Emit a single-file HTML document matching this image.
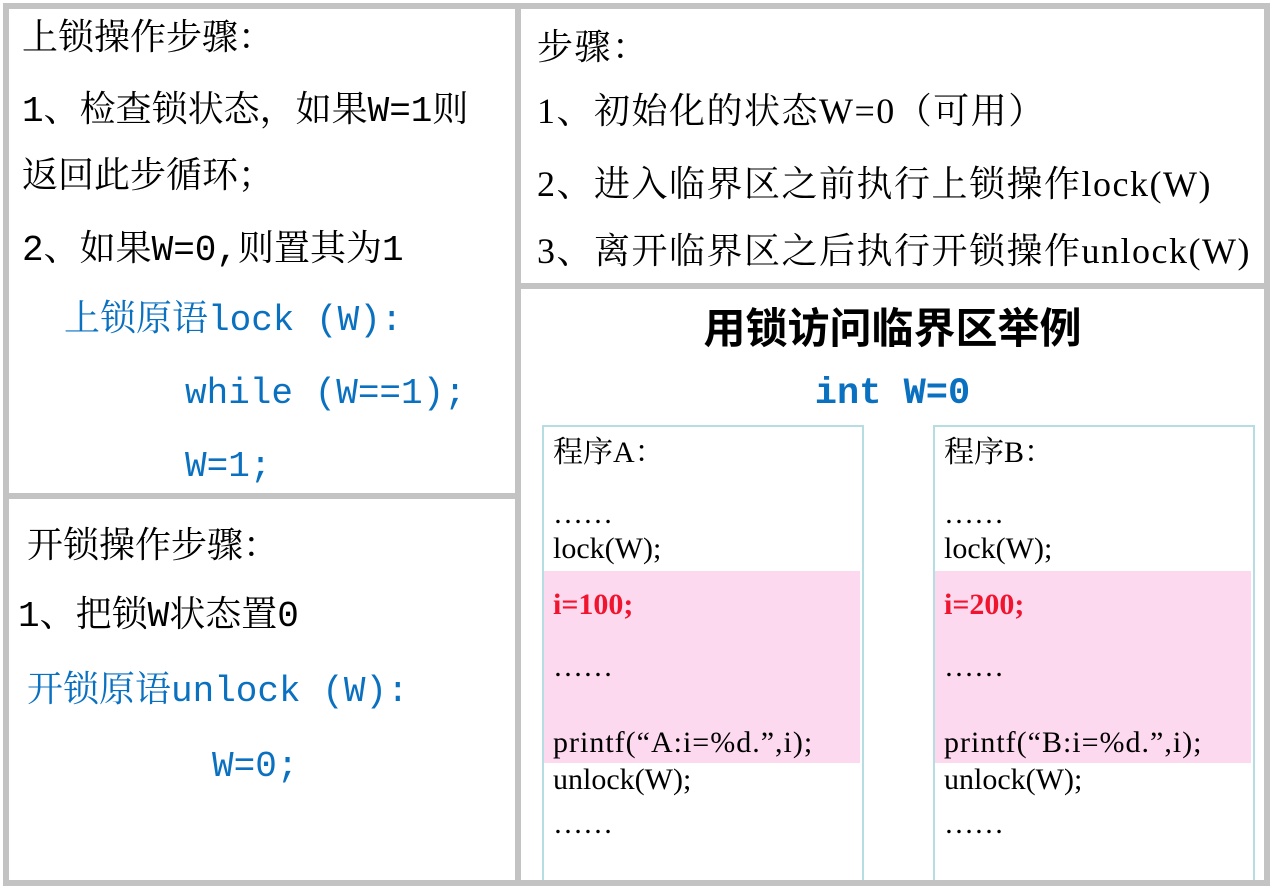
<!DOCTYPE html>
<html><head><meta charset="utf-8">
<style>
html,body{margin:0;padding:0;background:#fff;width:1276px;height:894px;overflow:hidden;position:relative}
.g{position:absolute;background:#c3c3c3}
.t{position:absolute;white-space:nowrap;line-height:1}
.m{font-family:"Liberation Mono","Noto Serif CJK SC",serif;font-size:36px;color:#000}
.b{color:#0a70c0}
.s{font-family:"Liberation Serif","Noto Serif CJK SC",serif;font-size:36px;letter-spacing:1.5px}
.c{font-family:"Liberation Serif","Noto Serif CJK SC",serif;font-size:30px}
.box{position:absolute;border:2px solid #b5dde2;border-bottom:none;background:#fff}
.pink{position:absolute;background:#fcd9ef}
.red{color:#f0142e;font-weight:bold}
</style></head><body>
<!-- panel 1 -->
<div class="t m" style="left:22px;top:22px">上锁操作步骤：</div>
<div class="t m" style="left:22px;top:94px">1、检查锁状态，如果W=1则</div>
<div class="t m" style="left:22px;top:160px">返回此步循环；</div>
<div class="t m" style="left:22px;top:233px">2、如果W=0,则置其为1</div>
<div class="t m b" style="left:64px;top:303px">上锁原语lock (W):</div>
<div class="t m b" style="left:185px;top:376px">while (W==1);</div>
<div class="t m b" style="left:185px;top:449px">W=1;</div>

<!-- panel 3 -->
<div class="t m" style="left:27px;top:530px">开锁操作步骤：</div>
<div class="t m" style="left:18px;top:599px">1、把锁W状态置0</div>
<div class="t m b" style="left:27px;top:674px">开锁原语unlock (W):</div>
<div class="t m b" style="left:212px;top:749px">W=0;</div>

<!-- panel 2 -->
<div class="t s" style="left:537px;top:29px">步骤：</div>
<div class="t s" style="left:537px;top:93px">1、初始化的状态W=0（可用）</div>
<div class="t s" style="left:537px;top:166px">2、进入临界区之前执行上锁操作lock(W)</div>
<div class="t s" style="left:537px;top:233px">3、离开临界区之后执行开锁操作unlock(W)</div>

<!-- panel 4 -->
<div class="t" style="left:521px;width:743px;text-align:center;top:305px;font-family:'Noto Sans CJK SC',sans-serif;font-weight:bold;font-size:42px">用锁访问临界区举例</div>
<div class="t" style="left:521px;width:743px;text-align:center;top:376px;font-family:'Liberation Mono',monospace;font-weight:bold;font-size:37px;color:#0a70c0">int W=0</div>

<div class="box" style="left:542px;top:425px;width:318px;height:460px"></div>
<div class="box" style="left:933px;top:425px;width:318px;height:460px"></div>
<div class="pink" style="left:544px;top:571px;width:316px;height:192px"></div>
<div class="pink" style="left:935px;top:571px;width:316px;height:192px"></div>

<div class="t c" style="left:553px;top:438px">程序A：</div>
<div class="t c" style="left:553px;top:499px">……</div>
<div class="t c" style="left:553px;top:534px">lock(W);</div>
<div class="t c red" style="left:553px;top:590px">i=100;</div>
<div class="t c" style="left:553px;top:652px">……</div>
<div class="t c" style="left:553px;top:728px;letter-spacing:1px">printf(“A:i=%d.”,i);</div>
<div class="t c" style="left:553px;top:765px">unlock(W);</div>
<div class="t c" style="left:553px;top:809px">……</div>

<div class="t c" style="left:944px;top:438px">程序B：</div>
<div class="t c" style="left:944px;top:499px">……</div>
<div class="t c" style="left:944px;top:534px">lock(W);</div>
<div class="t c red" style="left:944px;top:590px">i=200;</div>
<div class="t c" style="left:944px;top:652px">……</div>
<div class="t c" style="left:944px;top:728px;letter-spacing:1px">printf(“B:i=%d.”,i);</div>
<div class="t c" style="left:944px;top:765px">unlock(W);</div>
<div class="t c" style="left:944px;top:809px">……</div>

<!-- gray frames -->
<div class="g" style="left:3px;top:3px;width:1267px;height:6px"></div>
<div class="g" style="left:3px;top:3px;width:6px;height:883px"></div>
<div class="g" style="left:1264px;top:3px;width:6px;height:883px"></div>
<div class="g" style="left:3px;top:880px;width:1267px;height:6px"></div>
<div class="g" style="left:515px;top:3px;width:6px;height:883px"></div>
<div class="g" style="left:3px;top:493px;width:518px;height:6px"></div>
<div class="g" style="left:515px;top:283px;width:755px;height:6px"></div>
<div style="position:absolute;left:0;top:886px;width:1276px;height:8px;background:#fff"></div>
</body></html>
